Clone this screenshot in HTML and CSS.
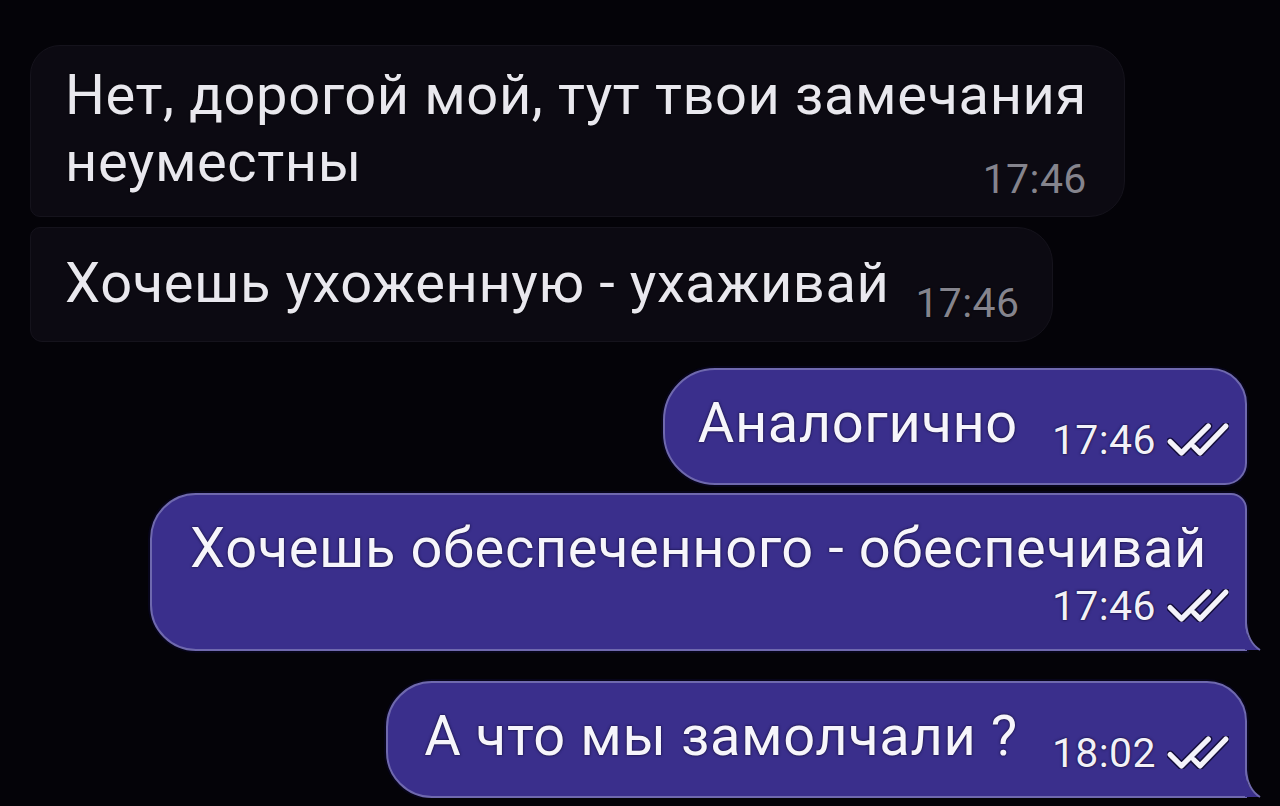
FILE: index.html
```html
<!DOCTYPE html>
<html lang="ru">
<head>
    <meta charset="UTF-8">
    <meta name="viewport" content="width=device-width, initial-scale=1.0">
    <link rel="stylesheet" href="styles.css">
    <title>Чат</title>
</head>
<body>
    <main class="chat">
        <div class="bubble in first stack">
            <p class="text">Нет, дорогой мой, тут твои замечания<br>неуместны</p>
            <span class="meta">17:46</span>
        </div>
        <div class="bubble in last">
            <p class="text">Хочешь ухоженную - ухаживай<span class="meta">17:46</span></p>
        </div>

        <div class="bubble out first">
            <p class="text">Аналогично<span class="meta">17:46<svg class="ticks" viewBox="0 0 60 32"><path class="under" d="M3 18 L14 29 L40 3 M26 23 L32 29 L57 3"/><path d="M3 18 L14 29 L40 3 M26 23 L32 29 L57 3"/></svg></span></p>
        </div>
        <div class="bubble out last">
            <p class="text">Хочешь обеспеченного - обеспечивай</p>
            <p class="meta-row"><span class="meta">17:46<svg class="ticks" viewBox="0 0 60 32"><path class="under" d="M3 18 L14 29 L40 3 M26 23 L32 29 L57 3"/><path d="M3 18 L14 29 L40 3 M26 23 L32 29 L57 3"/></svg></span></p>
            <svg class="tail" viewBox="0 0 16 28"><path d="M0 0 C1 14 6 22 15 27 L0 27 Z"/><path class="edge" d="M1 0 C2 14 7 22 15 27"/></svg>
        </div>

        <div class="bubble out single">
            <p class="text">А что мы замолчали ?<span class="meta">18:02<svg class="ticks" viewBox="0 0 60 32"><path class="under" d="M3 18 L14 29 L40 3 M26 23 L32 29 L57 3"/><path d="M3 18 L14 29 L40 3 M26 23 L32 29 L57 3"/></svg></span></p>
            <svg class="tail" viewBox="0 0 16 28"><path d="M0 0 C1 14 6 22 15 27 L0 27 Z"/><path class="edge" d="M1 0 C2 14 7 22 15 27"/></svg>
        </div>
    </main>
</body>
</html>
```

FILE: styles.css
```css
body {
    margin: 0;
    background-color: #040308;
    font-family: Roboto, "Noto Sans", sans-serif;
}
.chat {
    display: flex;
    flex-direction: column;
    padding: 45px 33px 0 30px;
}
.bubble {
    position: relative;
    box-sizing: border-box;
    padding: 22px 37px 24px 34px;
}
.text {
    margin: 0;
    font-size: 56px;
    line-height: 67px;
    letter-spacing: 0.6px;
    color: #f1f0f5;
    white-space: nowrap;
}
.meta {
    display: inline-block;
    margin-left: 34px;
    font-size: 41px;
    line-height: 39px;
    letter-spacing: 0.4px;
    vertical-align: -12px;
}

/* incoming */
.in {
    align-self: flex-start;
    background-color: #0c0a12;
    border: 1px solid #15131c;
}
.in .text {
    color: #e9e8ee;
    text-shadow: 0 0 2px #000;
}
.in .meta {
    color: #85848d;
}
.in.first {
    border-radius: 30px 36px 36px 10px;
    margin-bottom: 10px;
    padding-top: 16px;
    padding-bottom: 20px;
}
.in.last {
    border-radius: 10px 36px 36px 12px;
    padding-right: 32px;
    padding-bottom: 18px;
}
.in.last .meta {
    margin-left: 26px;
    vertical-align: -15px;
}
.stack {
    display: grid;
}
.stack > * {
    grid-area: 1 / 1;
}
.stack .meta {
    justify-self: end;
    align-self: end;
    margin: 0 0 -3px 0;
}

/* outgoing */
.out {
    align-self: flex-end;
    background-color: #3a2f8c;
    border: 2px solid #6f69ae;
    box-shadow: 0 0 0 2px #07051a;
    padding: 20px 16px 23px 33px;
}
.out .text {
    color: #f6f5fb;
    text-shadow: 0 0 1px #150f3d, 0 0 3px #150f3d;
}
.out .meta {
    color: #f2f1f8;
    text-shadow: 0 0 1px #150f3d, 0 0 3px #150f3d;
}
.out.first {
    border-radius: 52px 36px 22px 52px;
    margin-top: 26px;
    margin-bottom: 8px;
}
.out.last {
    border-radius: 46px 16px 0 46px;
    padding-right: 38px;
    padding-left: 38px;
}
.out.single {
    border-radius: 46px 40px 0 46px;
    margin-top: 30px;
    padding-left: 36px;
}
.meta-row {
    margin: 5px -22px 0 0;
    text-align: right;
}
.meta-row .meta {
    margin-left: 0;
    vertical-align: 0;
}
.ticks {
    width: 62px;
    height: 33px;
    margin-left: 11px;
    vertical-align: -2px;
    fill: none;
    stroke: #f4f3fa;
    stroke-width: 5;
    stroke-linecap: round;
    stroke-linejoin: round;
}
.ticks .under {
    stroke: #150f3d;
    stroke-width: 8;
}
.tail {
    position: absolute;
    right: -16px;
    bottom: -2px;
    width: 16px;
    height: 28px;
    fill: #3a2f8c;
}
.tail .edge {
    fill: none;
    stroke: #6f69ae;
    stroke-width: 2;
}
```
